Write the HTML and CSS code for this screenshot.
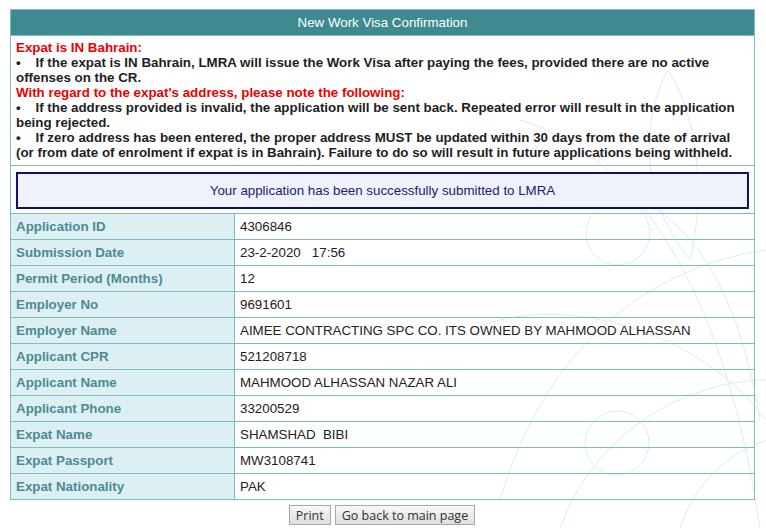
FILE: index.html
```html
<!DOCTYPE html>
<html>
<head>
<meta charset="utf-8">
<title>New Work Visa Confirmation</title>
<link rel="stylesheet" href="styles.css">
</head>
<body>
<svg class="decor" width="766" height="528" viewBox="0 0 766 528" aria-hidden="true">
  <g fill="none" stroke="#d9eef0" stroke-width="1">
    <circle cx="618" cy="233" r="32"/>
    <circle cx="617" cy="443" r="32"/>
    <path d="M668 70 C 640 120, 640 200, 690 260"/>
    <path d="M668 70 C 700 120, 705 200, 690 260"/>
    <path d="M500 500 C 560 300, 700 260, 766 250"/>
    <path d="M470 330 C 560 290, 700 330, 766 420"/>
    <path d="M560 528 C 600 420, 700 380, 766 380"/>
    <path d="M680 528 C 700 470, 740 450, 766 440"/>
    <path d="M640 200 C 700 230, 740 300, 760 420"/>
    <path d="M520 120 C 620 150, 720 260, 760 528"/>
  </g>
</svg>
<div class="page">
  <table class="panel">
    <colgroup>
      <col class="col-label">
      <col class="col-value">
    </colgroup>
    <tr>
      <th colspan="2" class="title">New Work Visa Confirmation</th>
    </tr>
    <tr>
      <td colspan="2" class="notice">
        <span class="red">Expat is IN Bahrain:</span><br>
        •&nbsp;&nbsp;&nbsp; If the expat is IN Bahrain, LMRA will issue the Work Visa after paying the fees, provided there are no active offenses on the CR.<br>
        <span class="red">With regard to the expat's address, please note the following:</span><br>
        •&nbsp;&nbsp;&nbsp; If the address provided is invalid, the application will be sent back. Repeated error will result in the application being rejected.<br>
        •&nbsp;&nbsp;&nbsp; If zero address has been entered, the proper address MUST be updated within 30 days from the date of arrival (or from date of enrolment if expat is in Bahrain). Failure to do so will result in future applications being withheld.
      </td>
    </tr>
    <tr>
      <td colspan="2" class="msgcell">
        <div class="msg">Your application has been successfully submitted to LMRA</div>
      </td>
    </tr>
    <tr><td class="label">Application ID</td><td class="value">4306846</td></tr>
    <tr><td class="label">Submission Date</td><td class="value">23-2-2020&nbsp;&nbsp;&nbsp;17:56</td></tr>
    <tr><td class="label">Permit Period (Months)</td><td class="value">12</td></tr>
    <tr><td class="label">Employer No</td><td class="value">9691601</td></tr>
    <tr><td class="label">Employer Name</td><td class="value">AIMEE CONTRACTING SPC CO. ITS OWNED BY MAHMOOD ALHASSAN</td></tr>
    <tr><td class="label">Applicant CPR</td><td class="value">521208718</td></tr>
    <tr><td class="label">Applicant Name</td><td class="value">MAHMOOD ALHASSAN NAZAR ALI</td></tr>
    <tr><td class="label">Applicant Phone</td><td class="value">33200529</td></tr>
    <tr><td class="label">Expat Name</td><td class="value">SHAMSHAD&nbsp; BIBI</td></tr>
    <tr><td class="label">Expat Passport</td><td class="value">MW3108741</td></tr>
    <tr><td class="label">Expat Nationality</td><td class="value">PAK</td></tr>
  </table>
  <div class="actions">
    <button class="btn" type="button">Print</button>
    <button class="btn" type="button">Go back to main page</button>
  </div>
</div>
</body>
</html>
```

FILE: styles.css
```css
html, body {
  margin: 0;
  padding: 0;
  background: #ffffff;
}

body {
  font-family: "Liberation Sans", Arial, sans-serif;
  font-size: 13.33px;
  color: #222222;
  position: relative;
  width: 766px;
  height: 528px;
  overflow: hidden;
}

.decor {
  position: absolute;
  left: 0;
  top: 0;
  z-index: 0;
}

.page {
  position: relative;
  z-index: 1;
  padding: 9px 0 0 10px;
}

.panel {
  width: 744px;
  border-collapse: collapse;
  border: 1px solid #7cbcc0;
  table-layout: fixed;
}

.col-label {
  width: 224px;
}

.col-value {
  width: 520px;
}

.panel td, .panel th {
  border: 1px solid #7cbcc0;
}

.title {
  background: #3e8a90;
  color: #ffffff;
  font-weight: normal;
  font-size: 13.33px;
  height: 25px;
  padding: 0;
  text-align: center;
  vertical-align: middle;
}

.notice {
  font-weight: bold;
  line-height: 15px;
  color: #1e1e1e;
  padding: 4px 16px 5px 5px;
  vertical-align: top;
}

.red {
  color: #ee0000;
}

.msgcell {
  padding: 6px 5px 4px 5px;
}

.msg {
  border: 2px solid #10105e;
  background: #eff1fc;
  color: #1a2270;
  height: 33px;
  display: flex;
  align-items: center;
  justify-content: center;
  font-size: 13.33px;
}

.label {
  background: #dcf0f4;
  color: #4d8a94;
  font-weight: bold;
  height: 25px;
  padding: 0 5px;
  vertical-align: middle;
  white-space: nowrap;
}

.value {
  color: #222222;
  height: 25px;
  padding: 0 5px;
  vertical-align: middle;
  white-space: nowrap;
}

.actions {
  width: 744px;
  display: flex;
  justify-content: center;
  gap: 4px;
  padding-top: 5px;
}

.btn {
  font-family: "Open Sans", "DejaVu Sans", sans-serif;
  font-size: 12.5px;
  color: #333333;
  background: linear-gradient(#f8f8f8, #dedede);
  border: 1px solid #a8a8a8;
  border-radius: 0;
  padding: 0 6px;
  height: 20px;
  line-height: 17px;
  margin: 0;
}
```
